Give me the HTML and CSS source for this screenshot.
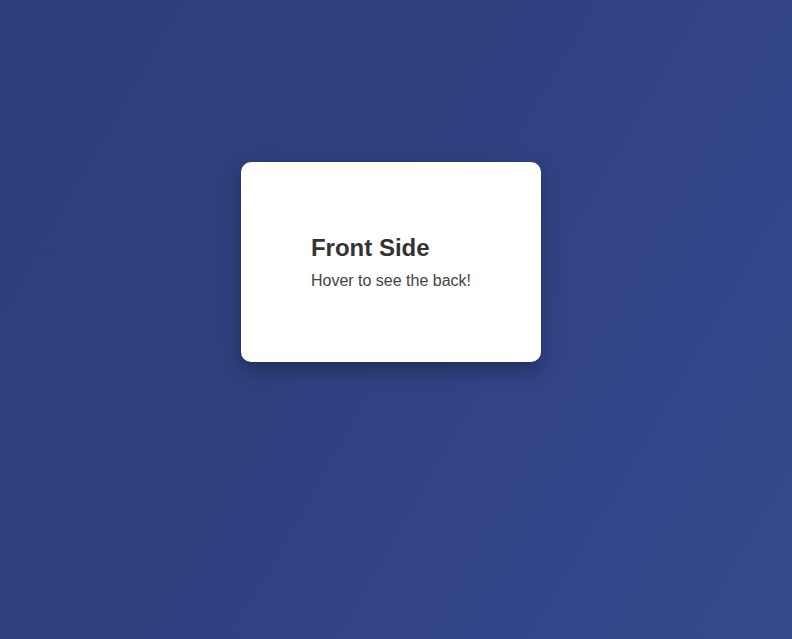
FILE: index.html
```html
<!DOCTYPE html>
<html lang="en">
<head>
<meta charset="utf-8">
<title>Flip Card</title>
<link rel="stylesheet" href="styles.css">
</head>
<body>
<div class="stage">
  <div class="card">
    <div class="card-front">
      <div class="card-content">
        <h2 class="card-title">Front Side</h2>
        <p class="card-text">Hover to see the back!</p>
      </div>
    </div>
  </div>
</div>
</body>
</html>
```
FILE: styles.css
```css
html, body {
  margin: 0;
  height: 100%;
}
body {
  background: linear-gradient(120deg, #2f3f7b 0%, #2f407e 40%, #33458a 75%, #36498c 100%);
  font-family: "Liberation Sans", Arial, sans-serif;
}
.stage {
  display: flex;
  padding: 162px 0 0 241px;
}
.card {
  width: 300px;
  height: 200px;
  background: #ffffff;
  border-radius: 10px;
  box-shadow: 0 8px 20px rgba(0, 0, 0, 0.3);
}
.card-front {
  height: 100%;
  display: flex;
  align-items: center;
  justify-content: center;
}
.card-content {
  display: flex;
  flex-direction: column;
}
.card-title {
  margin: 0 0 10px;
  font-size: 24px;
  font-weight: bold;
  color: #333333;
}
.card-text {
  margin: 0;
  font-size: 16px;
  color: #444444;
}
```
